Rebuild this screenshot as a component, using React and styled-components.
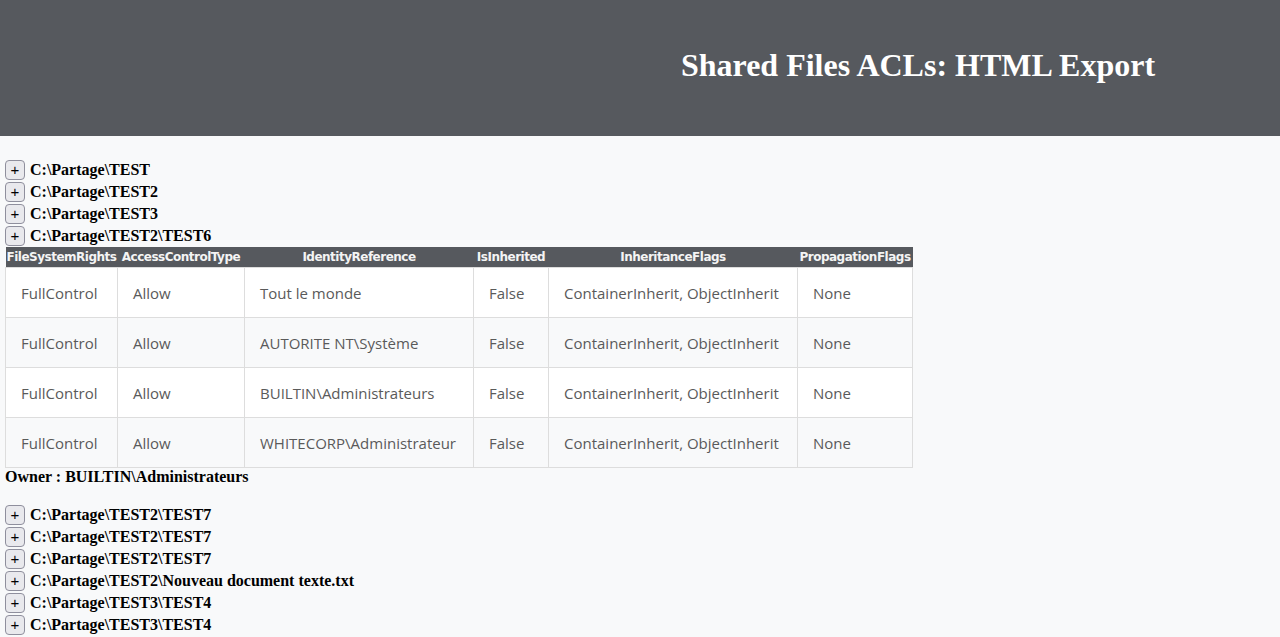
import styled, { createGlobalStyle } from 'styled-components';

const GlobalStyle = createGlobalStyle`
  body {
    margin: 0;
    background: #f8f9fa;
    font-family: "Liberation Serif", "Times New Roman", serif;
  }
`;

const Header = styled.header`
  height: 136px;
  background: #56595e;
  display: flex;
  align-items: center;
  justify-content: center;
  padding-left: 556px;
  padding-bottom: 6px;
  box-sizing: border-box;
`;

const Title = styled.h1`
  margin: 0;
  font-size: 32px;
  font-weight: bold;
  color: #ffffff;
`;

const Main = styled.main`
  padding: 23px 5px 0;
`;

const Row = styled.div`
  display: flex;
  align-items: center;
  gap: 5px;
  height: 22px;
`;

const Toggle = styled.button`
  width: 20px;
  height: 20px;
  padding: 0;
  border: 1px solid #8f8f9d;
  border-radius: 4px;
  background: #e9e9ed;
  color: #000;
  font-family: "Liberation Sans", Arial, sans-serif;
  font-size: 15px;
  line-height: 18px;
`;

const Path = styled.span`
  font-size: 16px;
  font-weight: bold;
  color: #000;
`;

const Table = styled.table`
  border-collapse: collapse;
  table-layout: fixed;
  width: 907px;
`;

const Th = styled.th`
  background: #56595e;
  color: #f4f4f4;
  font-family: "DejaVu Sans", Verdana, sans-serif;
  font-size: 12px;
  font-weight: bold;
  height: 20px;
  padding: 0 1px;
  white-space: nowrap;
  text-align: center;
  letter-spacing: -0.5px;
`;

const Tr = styled.tr`
  background: ${(p) => (p.$alt ? '#f8f9fa' : '#ffffff')};
`;

const Td = styled.td`
  height: 49px;
  padding: 0 0 0 15px;
  border: 1px solid #dddddd;
  color: #5a5a5a;
  font-family: "Open Sans", "Noto Sans", sans-serif;
  font-size: 15px;
  white-space: nowrap;
`;

const Owner = styled.p`
  margin: 0 0 18px;
  font-size: 16px;
  font-weight: bold;
  line-height: 18px;
`;

const columns = [
  ['FileSystemRights', 112],
  ['AccessControlType', 127],
  ['IdentityReference', 229],
  ['IsInherited', 75],
  ['InheritanceFlags', 249],
  ['PropagationFlags', 115],
];

const aces = [
  'Tout le monde',
  'AUTORITE NT\\Système',
  'BUILTIN\\Administrateurs',
  'WHITECORP\\Administrateur',
];

const before = [
  'C:\\Partage\\TEST',
  'C:\\Partage\\TEST2',
  'C:\\Partage\\TEST3',
  'C:\\Partage\\TEST2\\TEST6',
];

const after = [
  'C:\\Partage\\TEST2\\TEST7',
  'C:\\Partage\\TEST2\\TEST7',
  'C:\\Partage\\TEST2\\TEST7',
  'C:\\Partage\\TEST2\\Nouveau document texte.txt',
  'C:\\Partage\\TEST3\\TEST4',
  'C:\\Partage\\TEST3\\TEST4',
  'C:\\Partage\\TEST3\\TEST5',
];

function Entry({ path }) {
  return (
    <Row>
      <Toggle>+</Toggle>
      <Path>{path}</Path>
    </Row>
  );
}

export default function App() {
  return (
    <>
      <GlobalStyle />
      <Header>
        <Title>Shared Files ACLs: HTML Export</Title>
      </Header>
      <Main>
        {before.map((p, i) => (
          <Entry key={i} path={p} />
        ))}
        <Table>
          <colgroup>
            {columns.map(([name, w]) => (
              <col key={name} style={{ width: w }} />
            ))}
          </colgroup>
          <thead>
            <tr>
              {columns.map(([name]) => (
                <Th key={name}>{name}</Th>
              ))}
            </tr>
          </thead>
          <tbody>
            {aces.map((id, i) => (
              <Tr key={id} $alt={i % 2 === 1}>
                <Td>FullControl</Td>
                <Td>Allow</Td>
                <Td>{id}</Td>
                <Td>False</Td>
                <Td>ContainerInherit, ObjectInherit</Td>
                <Td>None</Td>
              </Tr>
            ))}
          </tbody>
        </Table>
        <Owner>Owner : BUILTIN\Administrateurs</Owner>
        {after.map((p, i) => (
          <Entry key={i} path={p} />
        ))}
      </Main>
    </>
  );
}
